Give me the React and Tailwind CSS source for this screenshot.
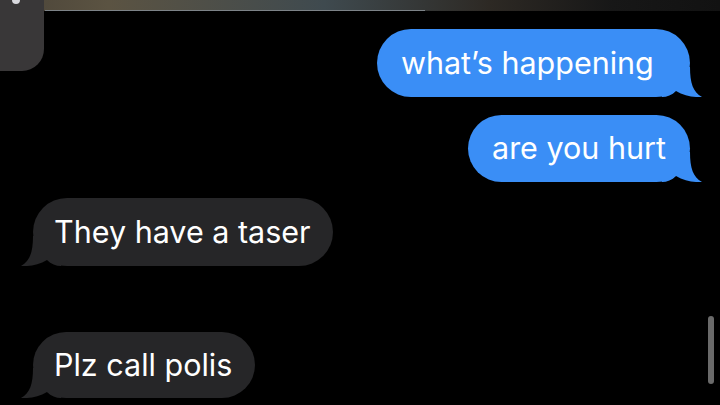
import React from 'react'

const BLUE = '#3a8ef6'
const GRAY = '#262628'

// iMessage style tail, drawn at the bottom corner of a bubble
function Tail({ side, color }) {
  const mine = side === 'right'
  return (
    <svg
      width="40"
      height="30"
      viewBox="0 0 40 30"
      className={mine ? 'absolute bottom-0 right-[-12px]' : 'absolute bottom-0 left-[-12px] -scale-x-100'}
    >
      <path d="M0 0 H28 C28 16 31 25 40 30 C32 30.5 22 29 14 24 C10 28 5 30 0 30 Z" fill={color} />
    </svg>
  )
}

function Bubble({ text, side, width, height = 68, className = '' }) {
  const mine = side === 'right'
  const color = mine ? BLUE : GRAY
  return (
    <div
      className={`relative flex items-center rounded-[34px] text-[30.5px] text-white ${mine ? 'self-end mr-[30px] pl-6 bg-[#3a8ef6]' : 'self-start ml-[33px] pl-[21px] bg-[#262628]'} ${className}`}
      style={{ width, height }}
    >
      <Tail side={side} color={color} />
      <span className="relative leading-none">{text}</span>
    </div>
  )
}

export default function App() {
  return (
    <div className="relative w-[720px] h-[405px] overflow-hidden bg-black font-['Inter','Liberation_Sans',sans-serif]">
      {/* blurred header strip */}
      <div className="relative h-[11px] bg-[linear-gradient(90deg,#4a4338_0%,#5b5342_15%,#3f4a4f_45%,#2d2924_68%,#171717_85%,#121212_100%)]">
        <div className="absolute bottom-0 left-[45px] h-px w-[380px] bg-[#7d8388]" />
      </div>

      {/* leftover element cut off at top-left */}
      <div className="absolute left-0 top-0 h-[71px] w-[44px] rounded-br-[22px] bg-[#393738]">
        <div className="absolute left-[12px] top-[-4px] h-[8px] w-[8px] rounded-full bg-[#d9d9de]" />
      </div>

      <div className="flex flex-col">
        <Bubble side="right" text="what’s happening" width={313} className="mt-[18px]" />
        <Bubble side="right" text="are you hurt" width={222} height={67} className="mt-[18px]" />
        <Bubble side="left" text="They have a taser" width={300} className="mt-[16px]" />
        <Bubble side="left" text="Plz call polis" width={222} height={66} className="mt-[66px]" />
      </div>

      {/* scroll indicator */}
      <div className="absolute right-[6px] top-[316px] h-[68px] w-[6px] rounded-full bg-[#6a6a6a]" />
    </div>
  )
}
